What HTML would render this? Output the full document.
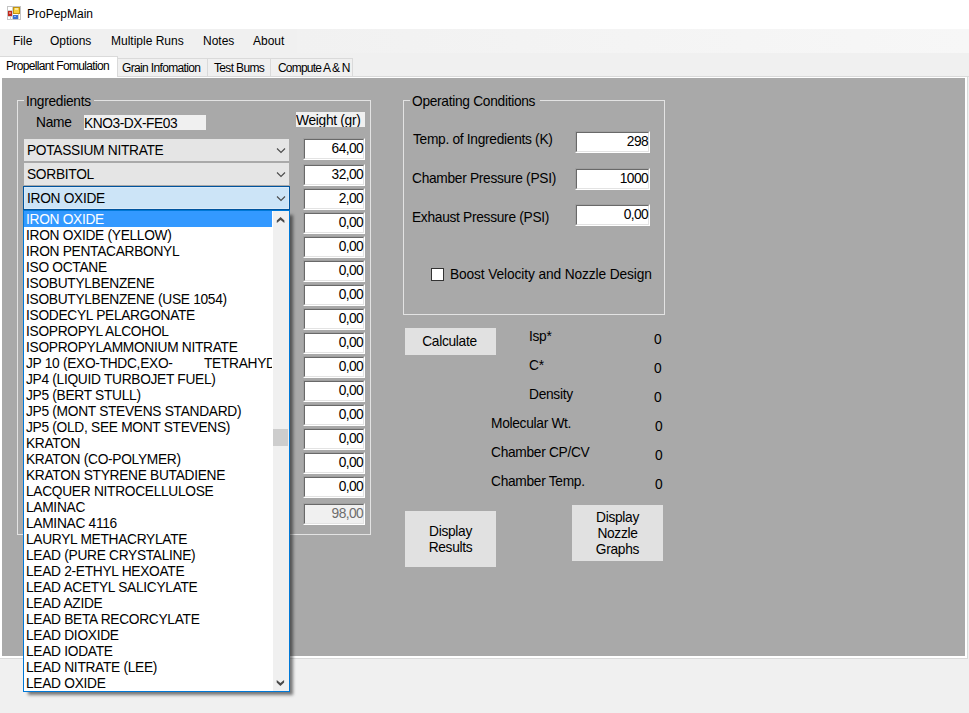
<!DOCTYPE html>
<html><head><meta charset="utf-8">
<style>
html,body{margin:0;padding:0;}
body{width:969px;height:713px;position:relative;overflow:hidden;background:#f0f0f0;font-family:"Liberation Sans",sans-serif;color:#000;}
div{position:absolute;box-sizing:border-box;}
.t{white-space:pre;font-size:13.75px;line-height:15px;letter-spacing:-0.3px;}
.m{white-space:pre;font-size:12px;line-height:14px;}
.tab{white-space:pre;font-size:12px;line-height:13px;letter-spacing:-0.65px;}
.tb{background:#fff;border-top:1px solid #a0a0a0;border-left:1px solid #a0a0a0;border-bottom:1px solid #fff;border-right:1px solid #fff;}
.tb::before{content:"";position:absolute;left:0;top:0;right:0;bottom:0;border-top:1px solid #696969;border-left:1px solid #696969;border-bottom:1px solid #e3e3e3;border-right:1px solid #e3e3e3;}
.tbv{position:absolute;right:1px;top:0;white-space:pre;font-size:13.75px;line-height:15px;letter-spacing:-0.6px;}
.gb{border:1px solid #e3e3e3;}
.btn{background:#e1e1e1;}
.li{left:2px;white-space:pre;font-size:13.75px;letter-spacing:-0.3px;line-height:16px;height:16px;padding-top:1px;}
</style></head>
<body>
<!-- title bar -->
<div style="left:0;top:0;width:969px;height:29px;background:#fff;"></div>
<svg style="position:absolute;left:7px;top:6px;" width="14" height="14" shape-rendering="crispEdges">
<rect x="0" y="0" width="14" height="14" fill="#fff"/>
<rect x="0.5" y="0.5" width="13" height="13" fill="none" stroke="#c4c4c4"/>
<rect x="5" y="0" width="1" height="14" fill="#cfcfcf"/>
<rect x="0" y="4" width="5" height="1" fill="#cfcfcf"/>
<rect x="0" y="10" width="5" height="1" fill="#cfcfcf"/>
<rect x="3" y="10" width="1" height="4" fill="#cfcfcf"/>
<rect x="11" y="8" width="1" height="6" fill="#cfcfcf"/>
<rect x="1" y="5" width="4" height="5" fill="#c0281c"/>
<rect x="2" y="6" width="2" height="2" fill="#e87a70"/>
<rect x="6" y="1" width="7" height="7" fill="#c49410"/>
<rect x="7" y="2" width="5" height="5" fill="#f8d040"/>
<rect x="8" y="2" width="3" height="2" fill="#fde89a"/>
<rect x="6" y="9" width="5" height="4" fill="#3a70d0"/>
<rect x="7" y="10" width="2" height="1" fill="#8fb4f0"/>
</svg>
<div class="m" style="left:27px;top:7px;">ProPepMain</div>

<!-- menu bar -->
<div style="left:0;top:29px;width:969px;height:28px;background:#f0f0f0;"></div>
<div style="left:297px;top:29px;width:672px;height:24px;background:linear-gradient(to right,#f1f1f1,#f7f7f7);"></div>
<div class="m" style="left:13px;top:34px;">File</div>
<div class="m" style="left:50px;top:34px;">Options</div>
<div class="m" style="left:111px;top:34px;">Multiple Runs</div>
<div class="m" style="left:203px;top:34px;">Notes</div>
<div class="m" style="left:253px;top:34px;">About</div>

<!-- tab strip -->
<div style="left:118px;top:76px;width:851px;height:1px;background:#dadada;"></div>
<div style="left:117px;top:58px;width:91px;height:19px;background:#f0f0f0;border:1px solid #dadada;"></div>
<div style="left:207px;top:58px;width:64px;height:19px;background:#f0f0f0;border:1px solid #dadada;"></div>
<div style="left:270px;top:58px;width:83px;height:19px;background:#f0f0f0;border:1px solid #dadada;"></div>
<div style="left:0;top:56px;width:118px;height:22px;background:#fff;border-top:1px solid #dadada;border-right:1px solid #dadada;"></div>
<div class="tab" style="left:6px;top:60px;">Propellant Fomulation</div>
<div class="tab" style="left:122px;top:62px;">Grain Infomation</div>
<div class="tab" style="left:214px;top:62px;">Test Bums</div>
<div class="tab" style="left:278px;top:62px;letter-spacing:-0.8px;">Compute A &amp; N</div>

<!-- tab page -->
<div style="left:0;top:77px;width:968px;height:582px;background:#fff;border-right:1px solid #dadada;border-bottom:1px solid #dadada;"></div>
<div style="left:2px;top:78px;width:963px;height:578px;background:#a9a9a9;"></div>

<!-- Ingredients group -->
<div class="gb" style="left:17px;top:100px;width:354px;height:435px;"></div>
<div style="left:24px;top:95px;width:70px;height:10px;background:#a9a9a9;"></div>
<div class="t" style="left:26px;top:94px;">Ingredients</div>
<div class="t" style="left:36px;top:115px;">Name</div>
<div style="left:84px;top:115px;width:122px;height:15px;background:#f0f0f0;"></div>
<div class="t" style="left:84px;top:116px;letter-spacing:-0.45px;">KNO3-DX-FE03</div>
<div style="left:296px;top:112px;width:69px;height:15px;background:#f0f0f0;overflow:hidden;"><div class="t" style="left:0;top:1px;">Weight (gr)</div></div>

<!-- combos -->
<div style="left:24px;top:139px;width:265px;height:22px;background:#e5e5e5;"></div>
<div class="t" style="left:27px;top:143px;">POTASSIUM NITRATE</div>
<div style="left:24px;top:163px;width:265px;height:22px;background:#e5e5e5;"></div>
<div class="t" style="left:27px;top:167px;">SORBITOL</div>
<div style="left:23px;top:186px;width:267px;height:24px;background:#cce4f7;border:1px solid #00549e;box-shadow:inset 0 0 0 1px #dbeaf8;"></div>
<div class="t" style="left:27px;top:191px;">IRON OXIDE</div>
<svg style="position:absolute;left:270px;top:140px;" width="20" height="70"><path d="M7 8.5 L11 12.5 L15 8.5 M7 32.5 L11 36.5 L15 32.5 M7 56.5 L11 60.5 L15 56.5" fill="none" stroke="#4a4a4a" stroke-width="1.1"/></svg>

<!-- weights -->
<div class="tb" style="left:303px;top:138px;width:62px;height:22px;"><div class="tbv" style="top:2px;">64,00</div></div>
<div class="tb" style="left:303px;top:164px;width:62px;height:22px;"><div class="tbv" style="top:2px;">32,00</div></div>
<div class="tb" style="left:303px;top:188px;width:62px;height:22px;"><div class="tbv" style="top:2px;">2,00</div></div>
<div class="tb" style="left:303px;top:212px;width:62px;height:22px;"><div class="tbv" style="top:2px;">0,00</div></div>
<div class="tb" style="left:303px;top:236px;width:62px;height:22px;"><div class="tbv" style="top:2px;">0,00</div></div>
<div class="tb" style="left:303px;top:260px;width:62px;height:22px;"><div class="tbv" style="top:2px;">0,00</div></div>
<div class="tb" style="left:303px;top:284px;width:62px;height:22px;"><div class="tbv" style="top:2px;">0,00</div></div>
<div class="tb" style="left:303px;top:308px;width:62px;height:22px;"><div class="tbv" style="top:2px;">0,00</div></div>
<div class="tb" style="left:303px;top:332px;width:62px;height:22px;"><div class="tbv" style="top:2px;">0,00</div></div>
<div class="tb" style="left:303px;top:356px;width:62px;height:22px;"><div class="tbv" style="top:2px;">0,00</div></div>
<div class="tb" style="left:303px;top:380px;width:62px;height:22px;"><div class="tbv" style="top:2px;">0,00</div></div>
<div class="tb" style="left:303px;top:404px;width:62px;height:22px;"><div class="tbv" style="top:2px;">0,00</div></div>
<div class="tb" style="left:303px;top:428px;width:62px;height:22px;"><div class="tbv" style="top:2px;">0,00</div></div>
<div class="tb" style="left:303px;top:452px;width:62px;height:22px;"><div class="tbv" style="top:2px;">0,00</div></div>
<div class="tb" style="left:303px;top:476px;width:62px;height:22px;"><div class="tbv" style="top:2px;">0,00</div></div>
<div class="tb" style="left:303px;top:503px;width:62px;height:22px;background:#f0f0f0;"><div class="tbv" style="top:2px;color:#6d6d6d;">98,00</div></div>

<!-- Operating Conditions -->
<div class="gb" style="left:403px;top:100px;width:262px;height:215px;"></div>
<div style="left:410px;top:95px;width:130px;height:10px;background:#a9a9a9;"></div>
<div class="t" style="left:412px;top:94px;">Operating Conditions</div>
<div class="t" style="left:413px;top:132px;">Temp. of Ingredients (K)</div>
<div class="t" style="left:412px;top:171px;">Chamber Pressure (PSI)</div>
<div class="t" style="left:412px;top:210px;">Exhaust Pressure (PSI)</div>
<div class="tb" style="left:575px;top:131px;width:75px;height:22px;"><div class="tbv" style="top:2px;">298</div></div>
<div class="tb" style="left:575px;top:168px;width:75px;height:22px;"><div class="tbv" style="top:2px;">1000</div></div>
<div class="tb" style="left:575px;top:204px;width:75px;height:22px;"><div class="tbv" style="top:2px;">0,00</div></div>
<div style="left:431px;top:268px;width:13px;height:13px;background:#fff;border:1px solid #333;"></div>
<div class="t" style="left:450px;top:267px;letter-spacing:-0.12px;">Boost Velocity and Nozzle Design</div>

<!-- results -->
<div class="btn" style="left:405px;top:328px;width:91px;height:27px;"></div>
<div class="t" style="left:404px;top:334px;width:91px;text-align:center;">Calculate</div>
<div class="t" style="left:529px;top:329px;">Isp*</div>
<div class="t" style="left:529px;top:358px;">C*</div>
<div class="t" style="left:529px;top:387px;">Density</div>
<div class="t" style="left:491px;top:416px;">Molecular Wt.</div>
<div class="t" style="left:491px;top:445px;">Chamber CP/CV</div>
<div class="t" style="left:491px;top:474px;">Chamber Temp.</div>
<div class="t" style="left:654px;top:332px;">0</div>
<div class="t" style="left:654px;top:361px;">0</div>
<div class="t" style="left:654px;top:390px;">0</div>
<div class="t" style="left:655px;top:419px;">0</div>
<div class="t" style="left:655px;top:448px;">0</div>
<div class="t" style="left:655px;top:477px;">0</div>

<div class="btn" style="left:405px;top:511px;width:91px;height:56px;"></div>
<div class="t" style="left:405px;top:524px;width:91px;text-align:center;line-height:16px;">Display
Results</div>
<div class="btn" style="left:572px;top:505px;width:91px;height:56px;"></div>
<div class="t" style="left:572px;top:510px;width:91px;text-align:center;line-height:16px;">Display
Nozzle
Graphs</div>

<!-- dropdown list -->
<div style="left:23px;top:210px;width:267px;height:482px;background:#fff;border:1px solid #0078d7;box-shadow:4px 4px 3px -1px rgba(0,0,0,0.5);">
<div style="left:0;top:0;width:248px;height:16px;background:#3399ff;"></div>
<div style="left:0;top:0;width:248px;height:480px;overflow:hidden;">
<div class="li" style="top:0px;color:#fff;">IRON OXIDE</div>
<div class="li" style="top:16px;">IRON OXIDE (YELLOW)</div>
<div class="li" style="top:32px;">IRON PENTACARBONYL</div>
<div class="li" style="top:48px;">ISO OCTANE</div>
<div class="li" style="top:64px;">ISOBUTYLBENZENE</div>
<div class="li" style="top:80px;">ISOBUTYLBENZENE (USE 1054)</div>
<div class="li" style="top:96px;">ISODECYL PELARGONATE</div>
<div class="li" style="top:112px;">ISOPROPYL ALCOHOL</div>
<div class="li" style="top:128px;">ISOPROPYLAMMONIUM NITRATE</div>
<div class="li" style="top:144px;">JP 10 (EXO-THDC,EXO-         TETRAHYD</div>
<div class="li" style="top:160px;">JP4 (LIQUID TURBOJET FUEL)</div>
<div class="li" style="top:176px;">JP5 (BERT STULL)</div>
<div class="li" style="top:192px;">JP5 (MONT STEVENS STANDARD)</div>
<div class="li" style="top:208px;">JP5 (OLD, SEE MONT STEVENS)</div>
<div class="li" style="top:224px;">KRATON</div>
<div class="li" style="top:240px;">KRATON (CO-POLYMER)</div>
<div class="li" style="top:256px;">KRATON STYRENE BUTADIENE</div>
<div class="li" style="top:272px;">LACQUER NITROCELLULOSE</div>
<div class="li" style="top:288px;">LAMINAC</div>
<div class="li" style="top:304px;">LAMINAC 4116</div>
<div class="li" style="top:320px;">LAURYL METHACRYLATE</div>
<div class="li" style="top:336px;">LEAD (PURE CRYSTALINE)</div>
<div class="li" style="top:352px;">LEAD 2-ETHYL HEXOATE</div>
<div class="li" style="top:368px;">LEAD ACETYL SALICYLATE</div>
<div class="li" style="top:384px;">LEAD AZIDE</div>
<div class="li" style="top:400px;">LEAD BETA RECORCYLATE</div>
<div class="li" style="top:416px;">LEAD DIOXIDE</div>
<div class="li" style="top:432px;">LEAD IODATE</div>
<div class="li" style="top:448px;">LEAD NITRATE (LEE)</div>
<div class="li" style="top:464px;">LEAD OXIDE</div>
</div>
<div style="left:249px;top:0;width:16px;height:480px;background:#f0f0f0;"></div>
<div style="left:249px;top:218px;width:15px;height:17px;background:#cdcdcd;"></div>
<svg style="position:absolute;left:249px;top:-1px;" width="16" height="482"><polygon points="3.8,10.6 7.6,7.1 11.4,10.6 11.4,13 7.6,10 3.8,13" fill="#4a4a4a"/><polygon points="3.7,469.9 7.4,472.9 11.1,469.9 11.1,472.4 7.4,476 3.7,472.4" fill="#4a4a4a"/></svg>
</div>
</body></html>
